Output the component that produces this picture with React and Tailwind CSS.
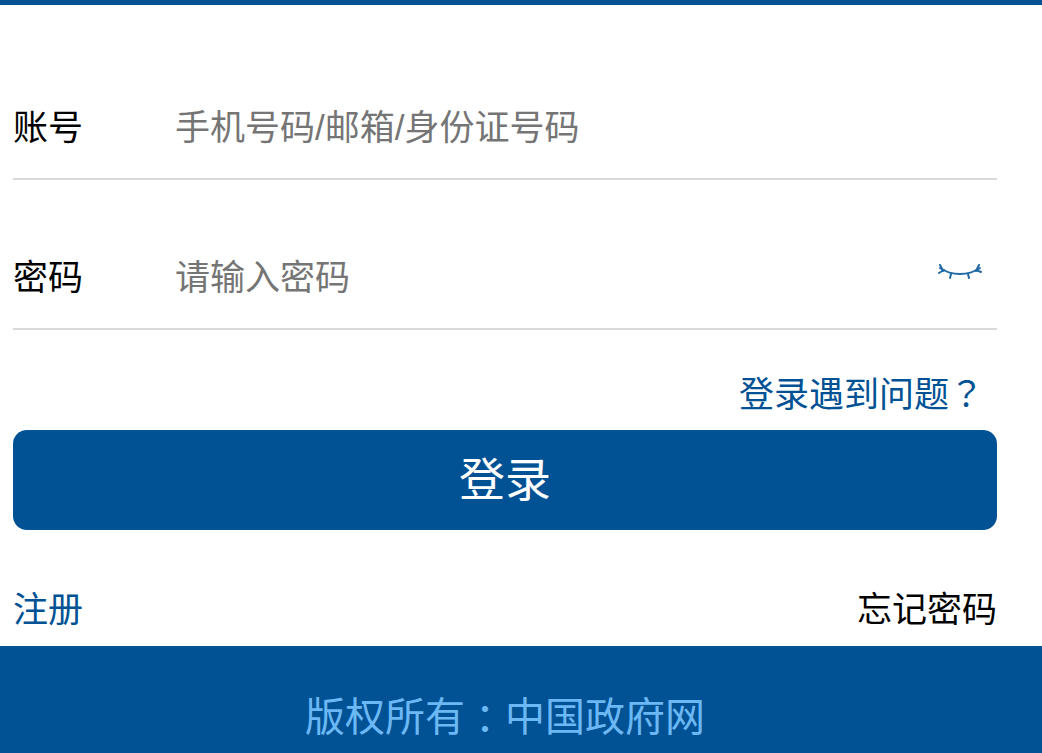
const cjk = "font-['Noto_Sans_CJK_TC']";

export default function App() {
    return (
        <div className="w-[1042px] h-[753px] overflow-hidden bg-white flex flex-col font-['Liberation_Sans','Noto_Sans_CJK_SC',sans-serif]">
            <div className="h-[5px] bg-[#005294]" />

            <div className="flex-1 pl-[13px] pr-[45px] flex flex-col">
                {/* account */}
                <div className="mt-[55px] h-[120px] pt-[18px] flex items-center border-b-2 border-[#d9d9d9]">
                    <label className="w-[162px] text-[35px] text-black">账号</label>
                    <span className="text-[35px] text-[#757575]">手机号码/邮箱/身份证号码</span>
                </div>

                {/* password */}
                <div className="mt-[30px] h-[120px] pt-[18px] flex items-center border-b-2 border-[#d9d9d9]">
                    <label className="w-[162px] text-[35px] text-black">密码</label>
                    <span className="text-[35px] text-[#757575] flex-1">请输入密码</span>
                    <svg width="46" height="18" viewBox="0 0 46 18" fill="none" stroke="#1f6aa6" strokeWidth="2" strokeLinecap="round" className="mr-[13px] mb-[16px]">
                        <path d="M2 7C8 11 14 13 22 13S36 11 42 7" />
                        <path d="M2 4L5 10M1 12L6 9M13 13L12 17M30 13L31 17M41 4L38 10M43 11L38 9" />
                    </svg>
                </div>

                <div className="mt-[37px] h-[50px] pr-[13px] text-right text-[35px] leading-[50px] text-[#005294]">
                    登录遇到问题<span className={cjk}>？</span>
                </div>

                <button type="button" className="mt-[13px] h-[100px] rounded-[14px] bg-[#005294] text-white text-[46px]">登录</button>

                <div className="mt-[55px] flex justify-between text-[35px] leading-[50px]">
                    <a className="text-[#005294]">注册</a>
                    <a className="text-black">忘记密码</a>
                </div>
            </div>

            <div className="h-[107px] shrink-0 bg-[#005294] flex items-center justify-center pr-[32px] pt-[34px] text-[40px] text-[#6cb8f5]">
                版权所有<span className={cjk}>：</span>中国政府网
            </div>
        </div>
    );
}
